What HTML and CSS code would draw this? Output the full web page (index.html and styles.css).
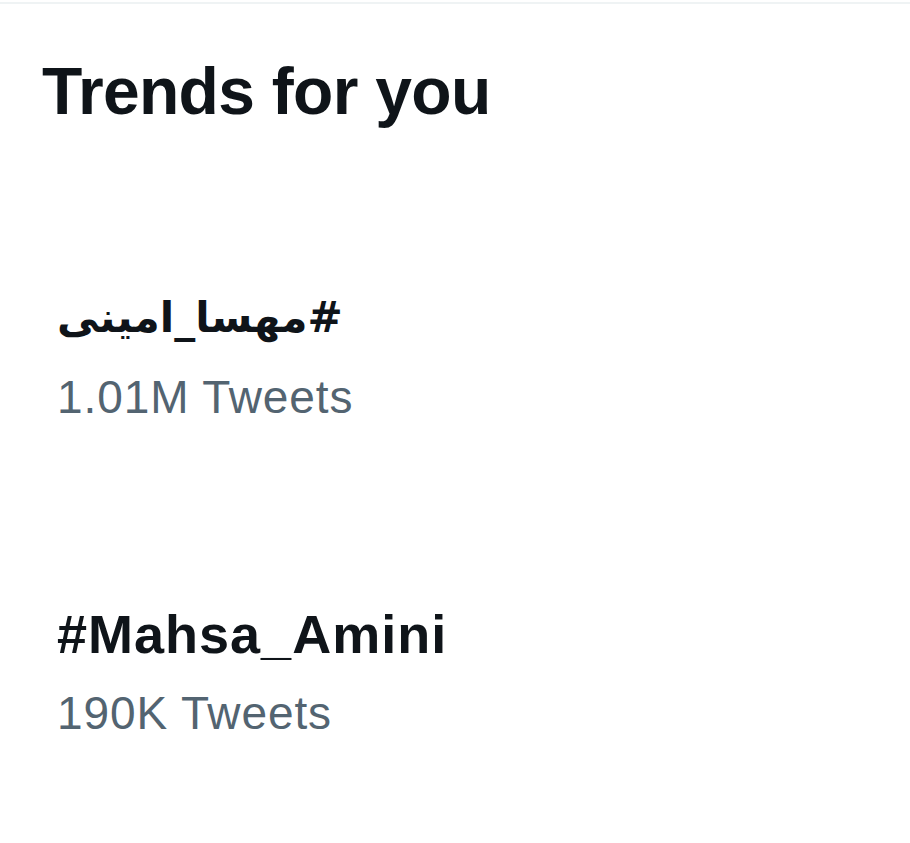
FILE: index.html
```html
<!DOCTYPE html>
<html>
<head>
<meta charset="utf-8">
<link rel="stylesheet" href="styles.css">
</head>
<body>
<div class="panel">
  <h1 class="title">Trends for you</h1>
  <div class="trend">
    <div class="trend-name arabic" dir="rtl">#مهسا_امینی</div>
    <div class="trend-count">1.01M Tweets</div>
  </div>
  <div class="trend">
    <div class="trend-name">#Mahsa_Amini</div>
    <div class="trend-count">190K Tweets</div>
  </div>
</div>
</body>
</html>
```
FILE: styles.css
```css
html, body {
  margin: 0;
  padding: 0;
  background: #ffffff;
}
body {
  width: 910px;
  height: 843px;
  overflow: hidden;
  font-family: "Liberation Sans", Arial, sans-serif;
  color: #0f1419;
}
.panel {
  margin-top: 2px;
  border-top: 2px solid #eff3f4;
  padding: 0 0 0 42px;
}
.title {
  margin: 0;
  padding-top: 47px;
  font-size: 66px;
  line-height: 80px;
  font-weight: 700;
  letter-spacing: -0.7px;
}
.trend {
  padding-left: 15px;
  margin-top: 155px;
}
.trend + .trend {
  margin-top: 175px;
}
.trend-name {
  font-size: 54px;
  line-height: 64px;
  font-weight: 700;
  letter-spacing: 1px;
}
.arabic {
  text-align: left;
  letter-spacing: 0;
  font-family: "DejaVu Sans", sans-serif;
  font-size: 42px;
}
.trend-count {
  margin-top: 17px;
  font-size: 46px;
  line-height: 60px;
  color: #536471;
  letter-spacing: 0.9px;
}
```
